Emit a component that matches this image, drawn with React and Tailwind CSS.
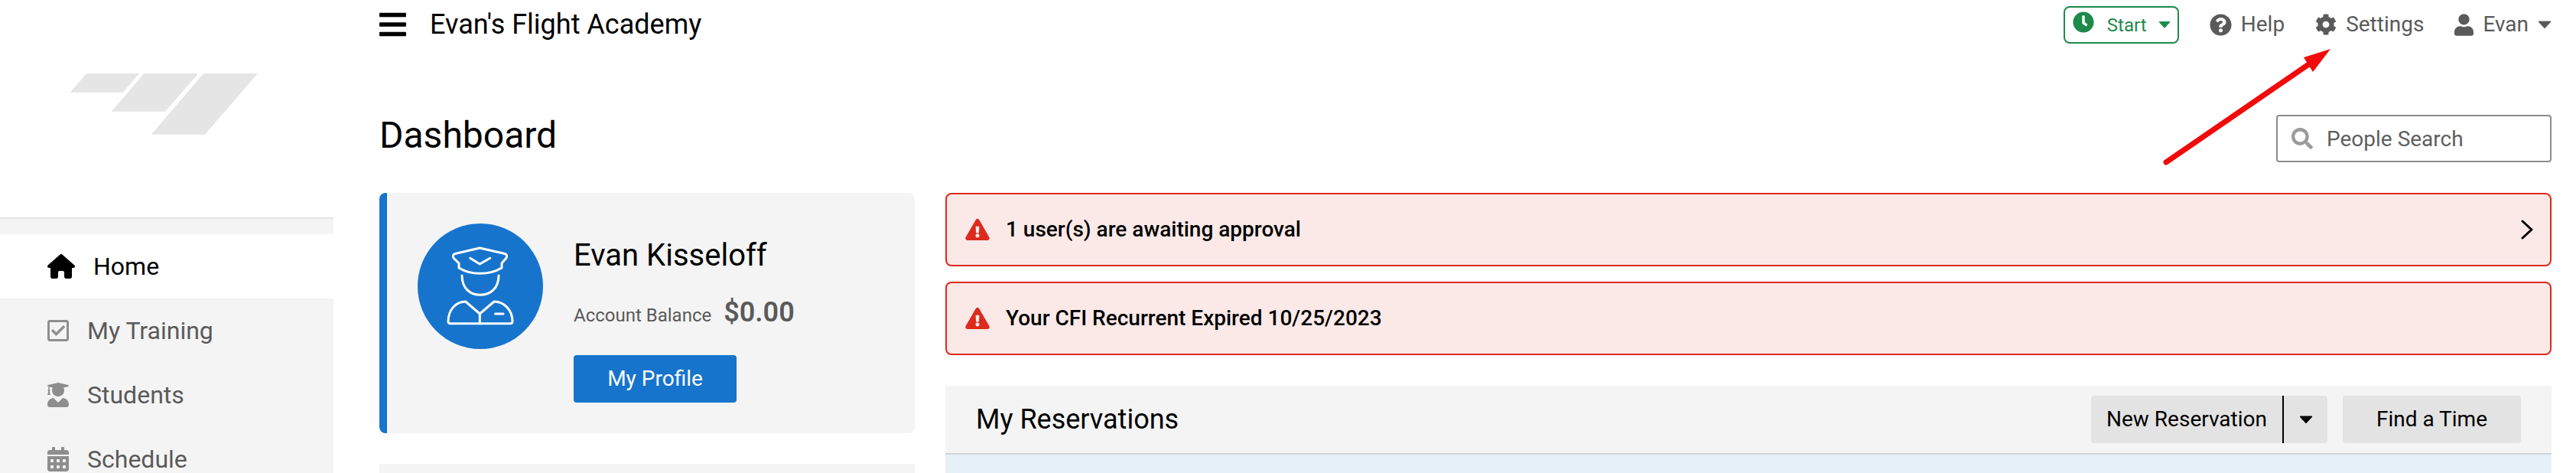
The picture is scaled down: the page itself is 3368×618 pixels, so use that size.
import React from 'react';
import {
    FaBars,
    FaCalendarAlt,
    FaClock,
    FaCog,
    FaExclamationTriangle,
    FaQuestionCircle,
    FaRegCheckSquare,
    FaSearch,
    FaUser,
    FaUserGraduate,
} from 'react-icons/fa';
import { FaHouse } from 'react-icons/fa6';

const navItems = [
    { label: 'My Training', Icon: FaRegCheckSquare, iconClass: 'w-[28px] h-[32px]' },
    { label: 'Students', Icon: FaUserGraduate, iconClass: 'w-[28px] h-[32px]' },
    { label: 'Schedule', Icon: FaCalendarAlt, iconClass: 'w-[28px] h-[32px]' },
];

const Caret = ({ className }) => (
    <svg viewBox="0 0 20 12" className={className} fill="currentColor" stroke="currentColor" strokeWidth="2" strokeLinejoin="round">
        <path d="M2 2h16l-8 8.5z" />
    </svg>
);

const Logo = () => (
    <svg viewBox="0 0 436 284" className="block w-[436px] h-[284px]" fill="#e5e5e5">
        <polygon points="113.3,96 181.7,96 160.7,120.7 91.7,120.7" />
        <polygon points="188.3,96 259.3,96 216,145.7 145.7,145.7" />
        <polygon points="266,96 337,96 268,175.7 197.7,175.7" />
    </svg>
);

const PilotIcon = () => (
    <svg viewBox="0 0 164 164" className="w-[164px] h-[164px] shrink-0" fill="none" stroke="#fff" strokeWidth="3" strokeLinecap="round" strokeLinejoin="round">
        <circle cx="82" cy="82" r="82" fill="#1774cc" stroke="none" />
        <path d="M81.3 32 L49 39.5 Q45 41 47 45 L54 52 V58 Q66 65.3 81.3 65.3 Q98 65.3 110 58 V52 L116 45 Q118 41 114 39.5 Z" />
        <path d="M68.7 45.3 L81.3 53 L94.7 45.3" />
        <path d="M58 68 C58 84 68 93.3 81.6 93.3 C96 93.3 106 84 106 68" />
        <path d="M40 128 C40 113 50 102 62.7 102 L81.3 118 L100 102 C113 102 124 113 124 128 Q124 130.7 121 130.7 H43 Q40 130.7 40 128 Z" />
        <path d="M81.3 118 V130.7" />
        <path d="M101.5 118 H112" />
    </svg>
);

const Sidebar = () => (
    <aside className="w-[436px] shrink-0">
        <Logo />
        <div className="border-t-2 border-[#e3e3e3] bg-[#f4f4f4] pt-[20px]">
            <div className="flex items-center h-[84px] bg-white pl-[62px] text-[32px] text-black">
                <FaHouse className="w-[36px] h-[32px] mr-[24px]" />
                <span>Home</span>
            </div>
            {navItems.map(({ label, Icon, iconClass }) => (
                <div key={label} className="flex items-center h-[84px] pl-[62px] text-[32px] text-[#5a5a5a]">
                    <Icon className={`${iconClass} mr-[24px] text-[#8e8e8e]`} />
                    <span>{label}</span>
                </div>
            ))}
        </div>
    </aside>
);

const TopBar = () => (
    <div className="flex items-center justify-between h-[64px] text-[#5a5a5a] text-[28px]">
        <div className="flex items-center text-black">
            <FaBars className="w-[35px] h-[40px]" />
            <span className="ml-[31px] text-[36px]">Evan's Flight Academy</span>
        </div>
        <div className="flex items-center">
            <div className="flex items-center w-[151px] h-[49px] border-2 border-[#1e8a4c] rounded-[8px] text-[#1e8a4c] text-[24px] pl-[10px]">
                <FaClock className="w-[28px] h-[28px] -mt-[6px]" />
                <span className="ml-[17px] mt-[2px]">Start</span>
                <Caret className="w-[16px] h-[10px] ml-[15px]" />
            </div>
            <FaQuestionCircle className="w-[29px] h-[29px] ml-[40px]" />
            <span className="ml-[12px]">Help</span>
            <FaCog className="w-[28px] h-[28px] ml-[40px]" />
            <span className="ml-[12px]">Settings</span>
            <FaUser className="w-[25px] h-[29px] ml-[40px]" />
            <span className="ml-[12px]">Evan</span>
            <Caret className="w-[18px] h-[12px] ml-[12px]" />
        </div>
    </div>
);

const Alert = ({ text, chevron }) => (
    <div className="flex items-center h-[96px] border-2 border-[#dc2a1c] rounded-[8px] bg-[#fbe9e7] pl-[24px] pr-[22px]">
        <FaExclamationTriangle className="w-[32px] h-[28px] text-[#dc2a1c]" />
        <span className="ml-[21px] flex-1 text-[28px] font-medium text-black">{text}</span>
        {chevron && (
            <svg viewBox="0 0 16 26" className="w-[16px] h-[26px]" fill="none" stroke="#000" strokeWidth="3" strokeLinecap="round" strokeLinejoin="round">
                <path d="M2 2l12 11L2 24" />
            </svg>
        )}
    </div>
);

// red annotation arrow that sits on top of the screenshot
const RedArrow = () => (
    <svg viewBox="0 0 3368 618" className="absolute inset-0 w-[3368px] h-[618px] pointer-events-none">
        <line x1="2832" y1="212" x2="3020" y2="83" stroke="#f20a0a" strokeWidth="7" strokeLinecap="round" />
        <polygon points="3047,64 3012,75 3024,94" fill="#f20a0a" />
    </svg>
);

export default function App() {
    return (
        <div className="relative flex w-[3368px] h-[618px] overflow-hidden bg-white font-['Roboto',sans-serif]">
            <Sidebar />
            <main className="flex-1 pl-[60px] pr-[32px]">
                <TopBar />
                <div className="flex items-start justify-between h-[188px] pt-[86px]">
                    <h1 className="text-[48px] leading-[62px] -mt-[4px] text-black">Dashboard</h1>
                    <div className="flex items-center w-[360px] h-[62px] border-2 border-[#8c8c8c] rounded-[4px] pl-[18px] text-[28px] text-[#5f5f5f]">
                        <FaSearch className="w-[28px] h-[28px] text-[#9a9a9a]" />
                        <span className="ml-[18px] mt-[1px]">People Search</span>
                    </div>
                </div>
                <div className="flex gap-[40px]">
                    <div className="w-[700px] shrink-0">
                        <div className="flex h-[314px] border-l-[10px] border-[#1774cc] rounded-[8px] bg-[#f4f4f4] pl-[40px] pt-[40px] gap-[40px]">
                            <PilotIcon />
                            <div>
                                <div className="text-[40px] leading-[48px] mt-[18px] text-black">Evan Kisseloff</div>
                                <div className="flex items-baseline mt-[28px] text-[#5a5a5a]">
                                    <span className="text-[24px]">Account Balance</span>
                                    <span className="ml-[16px] text-[36px] leading-[44px] font-semibold">$0.00</span>
                                </div>
                                <button className="block w-[213px] h-[62px] mt-[34px] rounded-[4px] bg-[#1774cc] text-[28px] text-white">My Profile</button>
                            </div>
                        </div>
                        <div className="h-[60px] mt-[40px] bg-[#f4f4f4]" />
                    </div>
                    <div className="flex-1">
                        <div className="flex flex-col gap-[20px]">
                            <Alert text="1 user(s) are awaiting approval" chevron />
                            <Alert text="Your CFI Recurrent Expired 10/25/2023" />
                        </div>
                        <div className="flex items-center justify-between h-[90px] mt-[40px] border-b-2 border-[#d4d4d4] bg-[#f4f4f4] pl-[40px] pr-[40px]">
                            <span className="text-[36px] text-black">My Reservations</span>
                            <div className="flex items-center text-[28px] text-black">
                                <div className="flex items-center w-[309px] h-[62px] rounded-[4px] bg-[#e3e3e3]">
                                    <span className="w-[250px] text-center">New Reservation</span>
                                    <span className="w-[2px] h-[62px] bg-black" />
                                    <span className="flex-1 flex justify-center">
                                        <Caret className="w-[18px] h-[12px]" />
                                    </span>
                                </div>
                                <div className="flex items-center justify-center w-[233px] h-[62px] ml-[20px] rounded-[4px] bg-[#e3e3e3]">Find a Time</div>
                            </div>
                        </div>
                        <div className="h-[40px] bg-[#e6f0f9]" />
                    </div>
                </div>
            </main>
            <RedArrow />
        </div>
    );
}
